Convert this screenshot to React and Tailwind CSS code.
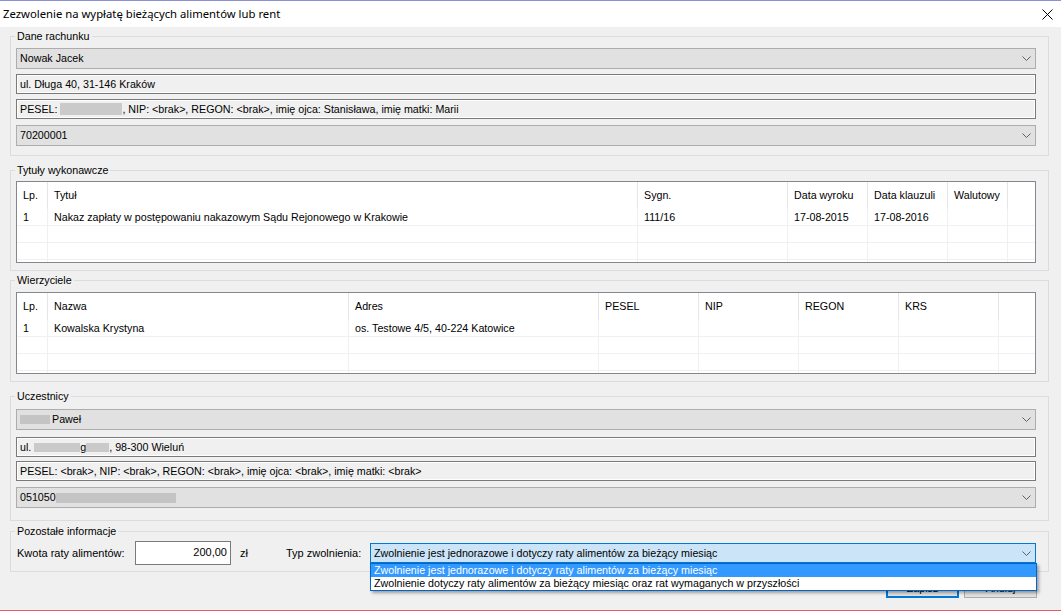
import React from "react";

const Chevron = () => (
  <svg width="9" height="5" viewBox="0 0 9 5" className="shrink-0">
    <path d="M0.5 0.5 L4.5 4.5 L8.5 0.5" fill="none" stroke="#5f5f5f" strokeWidth="1" />
  </svg>
);

const Block = ({ w, h }) => (
  <span className={`inline-block bg-[#cacaca] align-middle ${w} ${h}`} />
);

const Combo = ({ children }) => (
  <div className="h-[21px] border border-[#adadad] bg-[#e1e1e1] flex items-center pl-[3px] pr-[4px]">
    <div className="flex-1 flex items-center whitespace-nowrap overflow-hidden">{children}</div>
    <Chevron />
  </div>
);

const TextBox = ({ children, className = "" }) => (
  <div
    className={`h-[20px] border border-[#7a7a7a] bg-[#f0f0f0] shadow-[inset_0_0_0_1px_#ffffff] flex items-center pl-[3px] whitespace-nowrap overflow-hidden ${className}`}
  >
    {children}
  </div>
);

const Group = ({ title, className = "", children }) => (
  <fieldset className={`ml-[10px] mr-[12px] border border-[#dcdcdc] pl-[5px] pr-[12px] min-w-0 shrink-0 ${className}`}>
    <legend className="ml-[-1px] px-[2px] leading-[13px]">{title}</legend>
    {children}
  </fieldset>
);

const Grid = ({ cols, header, row }) => {
  const emptyRows = [0, 1, 2];
  return (
    <div className="h-[82px] border border-[#828790] bg-white overflow-hidden flex flex-col">
      <div className="flex h-[27px] shrink-0">
        {cols.map((w, i) => (
          <div key={i} className={`${w} shrink-0 border-r border-[#e5e5e5] pl-[6px] flex items-center whitespace-nowrap`}>
            {header[i]}
          </div>
        ))}
        <div className="flex-1" />
      </div>
      {[row, ...emptyRows.map(() => null)].map((r, ri) => (
        <div key={ri} className="flex h-[17px] shrink-0 border-b border-[#f0f0f0]">
          {cols.map((w, i) => (
            <div key={i} className={`${w} shrink-0 border-r border-[#f0f0f0] pl-[6px] flex items-center whitespace-nowrap`}>
              {r ? r[i] : ""}
            </div>
          ))}
          <div className="flex-1" />
        </div>
      ))}
    </div>
  );
};

export default function App() {
  return (
    <div className="w-[1061px] h-[611px] bg-[#f0f0f0] flex flex-col overflow-hidden text-[10.7px] leading-[13px] text-black font-['Liberation_Sans',Arial,sans-serif]">
      <div className="h-[1px] shrink-0 bg-[#8a8fd6]" />
      <div className="h-[26px] shrink-0 bg-white flex items-center justify-between pl-[3px] pr-[8px]">
        <span className="font-['Noto_Sans',sans-serif] text-[11.3px] leading-[16px]">
          Zezwolenie na wypłatę bieżących alimentów lub rent
        </span>
        <svg width="11" height="11" viewBox="0 0 11 11">
          <path d="M0.5 0.5 L10.5 10.5 M10.5 0.5 L0.5 10.5" stroke="#000" strokeWidth="1" fill="none" />
        </svg>
      </div>

      <Group title="Dane rachunku" className="mt-[3px] pt-[5px] pb-[9px]">
        <Combo>Nowak Jacek</Combo>
        <TextBox className="mt-[5px]">ul. Długa 40, 31-146 Kraków</TextBox>
        <TextBox className="mt-[5px]">
          PESEL:&nbsp;<Block w="w-[62px]" h="h-[12px]" />, NIP: &lt;brak&gt;, REGON: &lt;brak&gt;, imię ojca: Stanisława, imię matki: Marii
        </TextBox>
        <div className="mt-[6px]">
          <Combo>70200001</Combo>
        </div>
      </Group>

      <Group title="Tytuły wykonawcze" className="mt-[8px] pt-[4px] pb-[7px]">
        <Grid
          cols={["w-[31px]", "w-[590px]", "w-[150px]", "w-[80px]", "w-[80px]", "w-[60px]"]}
          header={["Lp.", "Tytuł", "Sygn.", "Data wyroku", "Data klauzuli", "Walutowy"]}
          row={["1", "Nakaz zapłaty w postępowaniu nakazowym Sądu Rejonowego w Krakowie", "111/16", "17-08-2015", "17-08-2016", ""]}
        />
      </Group>

      <Group title="Wierzyciele" className="mt-[3px] pt-[5px] pb-[7px]">
        <Grid
          cols={["w-[31px]", "w-[301px]", "w-[250px]", "w-[100px]", "w-[100px]", "w-[100px]", "w-[100px]"]}
          header={["Lp.", "Nazwa", "Adres", "PESEL", "NIP", "REGON", "KRS"]}
          row={["1", "Kowalska Krystyna", "os. Testowe 4/5, 40-224 Katowice", "", "", "", ""]}
        />
      </Group>

      <Group title="Uczestnicy" className="mt-[8px] pt-[6px] pb-[12px]">
        <Combo>
          <span className="ml-[-1px] inline-block w-[31px] h-[9px] bg-[#c4c4c4]" />
          <span className="ml-[2px]">Paweł</span>
        </Combo>
        <TextBox className="mt-[7px]">
          ul.&nbsp;<Block w="w-[46px]" h="h-[9px]" />g<Block w="w-[23px]" h="h-[9px]" />, 98-300 Wieluń
        </TextBox>
        <TextBox className="mt-[4px]">
          PESEL: &lt;brak&gt;, NIP: &lt;brak&gt;, REGON: &lt;brak&gt;, imię ojca: &lt;brak&gt;, imię matki: &lt;brak&gt;
        </TextBox>
        <div className="mt-[6px]">
          <Combo>
            051050
            <span className="inline-block w-[120px] h-[10px] bg-[#c4c4c4]" />
          </Combo>
        </div>
      </Group>

      <Group title="Pozostałe informacje" className="mt-[4px] pt-[3px] pb-[6px]">
        <div className="flex items-center h-[24px]">
          <div className="w-[119px] shrink-0 pl-[1px] text-[11px]">Kwota raty alimentów:</div>
          <div className="w-[96px] h-[24px] shrink-0 border border-[#7a7a7a] bg-white flex items-center justify-end pr-[3px] pb-[2px] text-[11px]">
            200,00
          </div>
          <div className="w-[55px] shrink-0 pl-[9px] text-[11px]">zł</div>
          <div className="w-[84px] shrink-0 text-[11px]">Typ zwolnienia:</div>
          <div className="relative flex-1 min-w-0">
            <div className="h-[20px] border border-[#0078d7] bg-[#cce4f7] flex items-center pl-[3px] pr-[4px]">
              <div className="flex-1 whitespace-nowrap overflow-hidden">
                Zwolnienie jest jednorazowe i dotyczy raty alimentów za bieżący miesiąc
              </div>
              <Chevron />
            </div>
            <div className="absolute top-full left-0 right-[-1px] z-10 border border-[#0066cc] bg-white shadow-[2px_2px_3px_rgba(0,0,0,0.35)]">
              <div className="h-[13px] bg-[#3399ff] text-white pl-[3px] flex items-center whitespace-nowrap">
                Zwolnienie jest jednorazowe i dotyczy raty alimentów za bieżący miesiąc
              </div>
              <div className="h-[13px] pl-[3px] flex items-center whitespace-nowrap">
                Zwolnienie dotyczy raty alimentów za bieżący miesiąc oraz rat wymaganych w przyszłości
              </div>
            </div>
          </div>
        </div>
      </Group>

      <div className="flex justify-end gap-[5px] mr-[24px] mt-[3px] shrink-0">
        <div className="w-[73px] h-[23px] border-2 border-[#0078d7] bg-[#e1e1e1] flex items-center justify-center pt-[4px]">
          Zapisz
        </div>
        <div className="w-[73px] h-[23px] border border-[#adadad] bg-[#e1e1e1] flex items-center justify-center pt-[4px]">
          Anuluj
        </div>
      </div>

      <div className="mt-auto h-[1px] shrink-0 bg-[#e55b6a]" />
    </div>
  );
}
